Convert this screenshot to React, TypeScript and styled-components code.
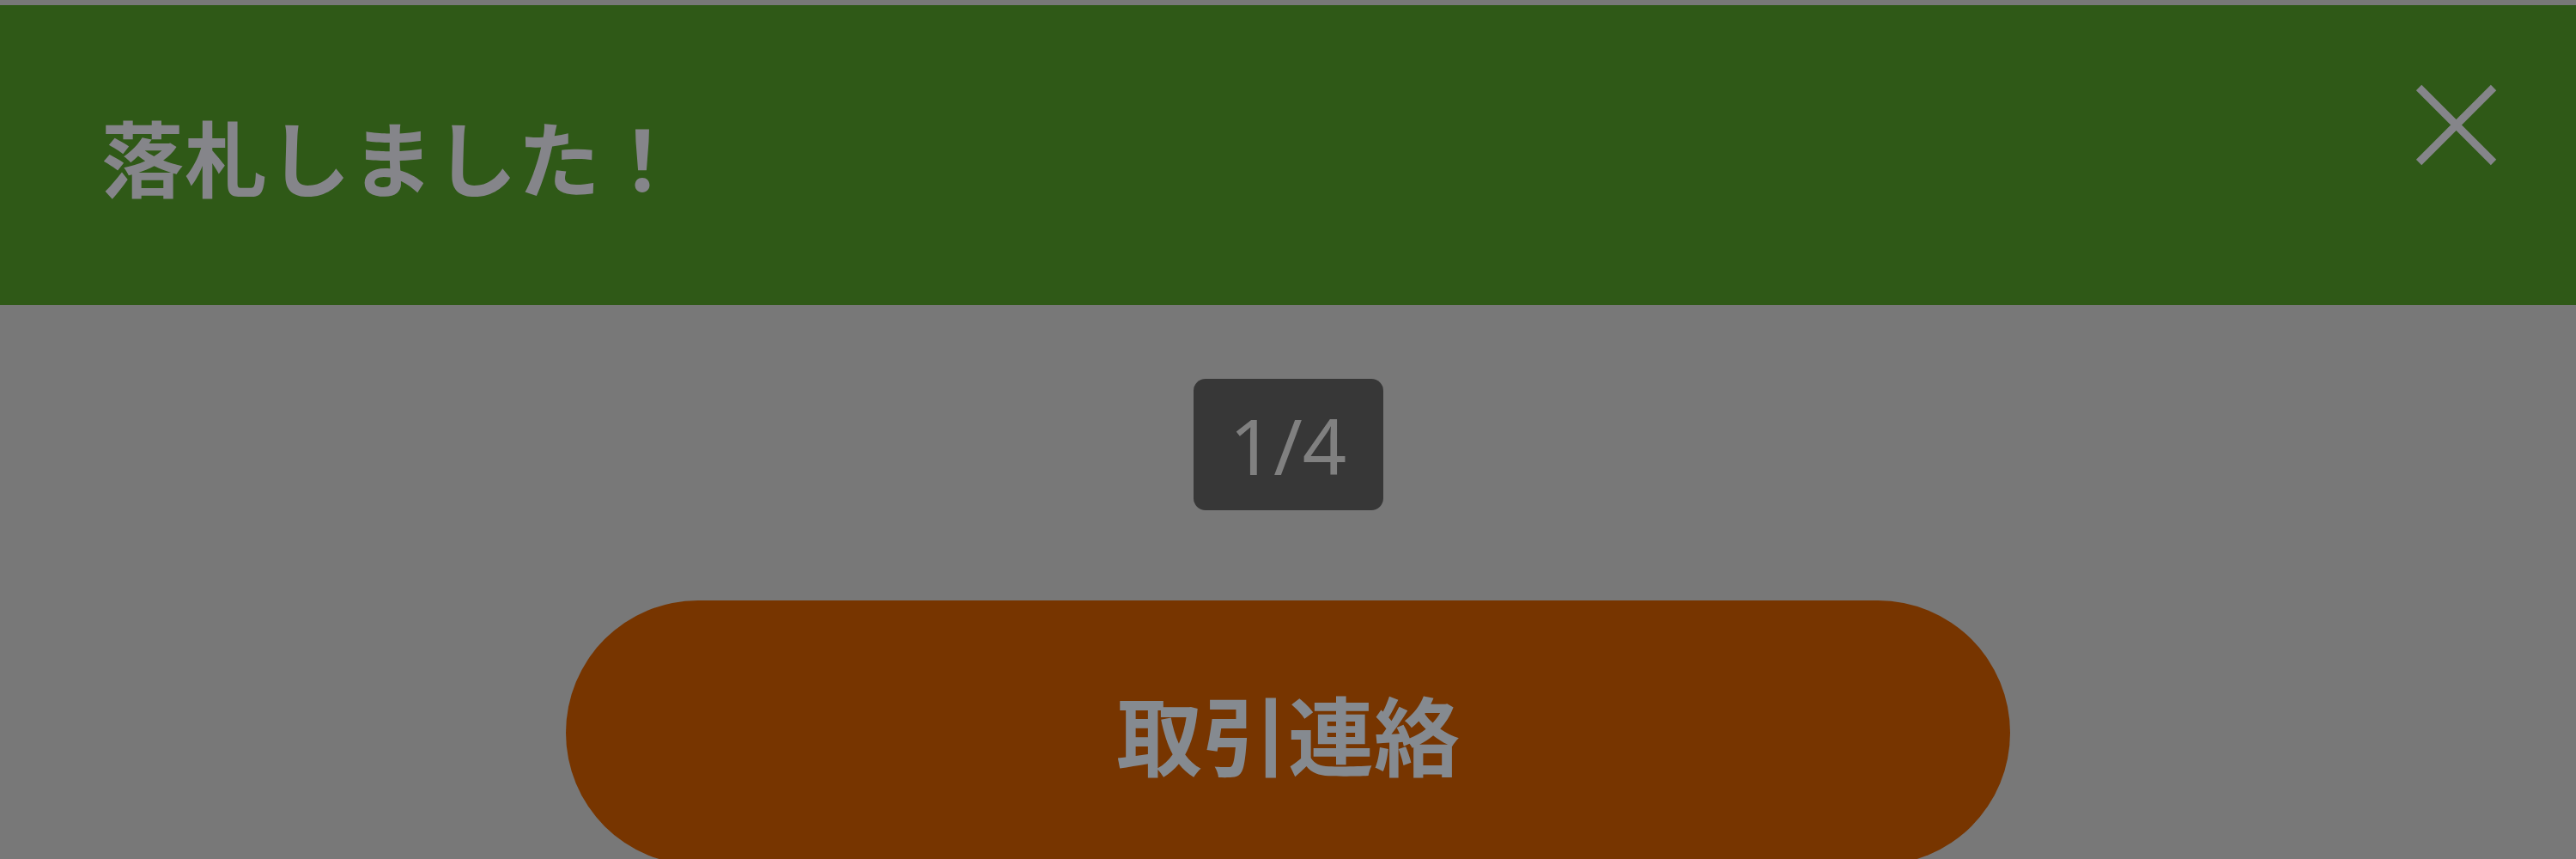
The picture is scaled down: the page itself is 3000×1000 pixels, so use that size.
import React from "react";
import styled, { createGlobalStyle } from "styled-components";

const GlobalStyle = createGlobalStyle`
  html, body {
    margin: 0;
    padding: 0;
    background: #787878;
    overflow: hidden;
  }
  body {
    font-family: "Noto Sans CJK JP", "Noto Sans", sans-serif;
  }
`;

const Page = styled.div`
  display: flex;
  flex-direction: column;
  padding-top: 6px;
  min-height: 1000px;
  box-sizing: border-box;
`;

const Banner = styled.header`
  height: 349px;
  background: #2f5917;
  display: flex;
  align-items: center;
  justify-content: space-between;
  padding: 0 92px 0 118px;
  box-sizing: border-box;
`;

const BannerTitle = styled.h1`
  margin: 0;
  font-size: 96px;
  line-height: 1;
  font-weight: 700;
  color: #85858a;
  letter-spacing: 1px;
`;

const CloseButton = styled.button`
  align-self: flex-start;
  margin-top: 92px;
  width: 95px;
  height: 95px;
  padding: 0;
  border: none;
  background: transparent;
  display: flex;
  cursor: pointer;
`;

const Body = styled.main`
  display: flex;
  flex-direction: column;
  align-items: center;
`;

const Counter = styled.div`
  margin-top: 86px;
  width: 221px;
  height: 153px;
  border-radius: 14px;
  background: #373737;
  color: #808080;
  display: flex;
  align-items: center;
  justify-content: center;
  font-family: "Noto Sans", "Noto Sans CJK JP", sans-serif;
  font-size: 90px;
  font-weight: 400;
  line-height: 1;
`;

const ContactButton = styled.button`
  margin-top: 105px;
  width: 1682px;
  height: 308px;
  border-radius: 154px;
  border: none;
  background: #773500;
  color: #858a90;
  font-family: "Noto Sans CJK JP", sans-serif;
  font-size: 100px;
  font-weight: 700;
  line-height: 1;
  display: flex;
  align-items: flex-start;
  justify-content: center;
  padding-top: 104px;
  box-sizing: border-box;
  cursor: pointer;
`;

export default function App() {
  return (
    <>
      <GlobalStyle />
      <Page>
        <Banner>
          <BannerTitle>落札しました！</BannerTitle>
          <CloseButton aria-label="閉じる">
            <svg width="95" height="95" viewBox="0 0 95 95">
              <path
                d="M4 4 L91 91 M91 4 L4 91"
                stroke="#85858a"
                strokeWidth="9"
                fill="none"
              />
            </svg>
          </CloseButton>
        </Banner>
        <Body>
          <Counter>1/4</Counter>
          <ContactButton>取引連絡</ContactButton>
        </Body>
      </Page>
    </>
  );
}
